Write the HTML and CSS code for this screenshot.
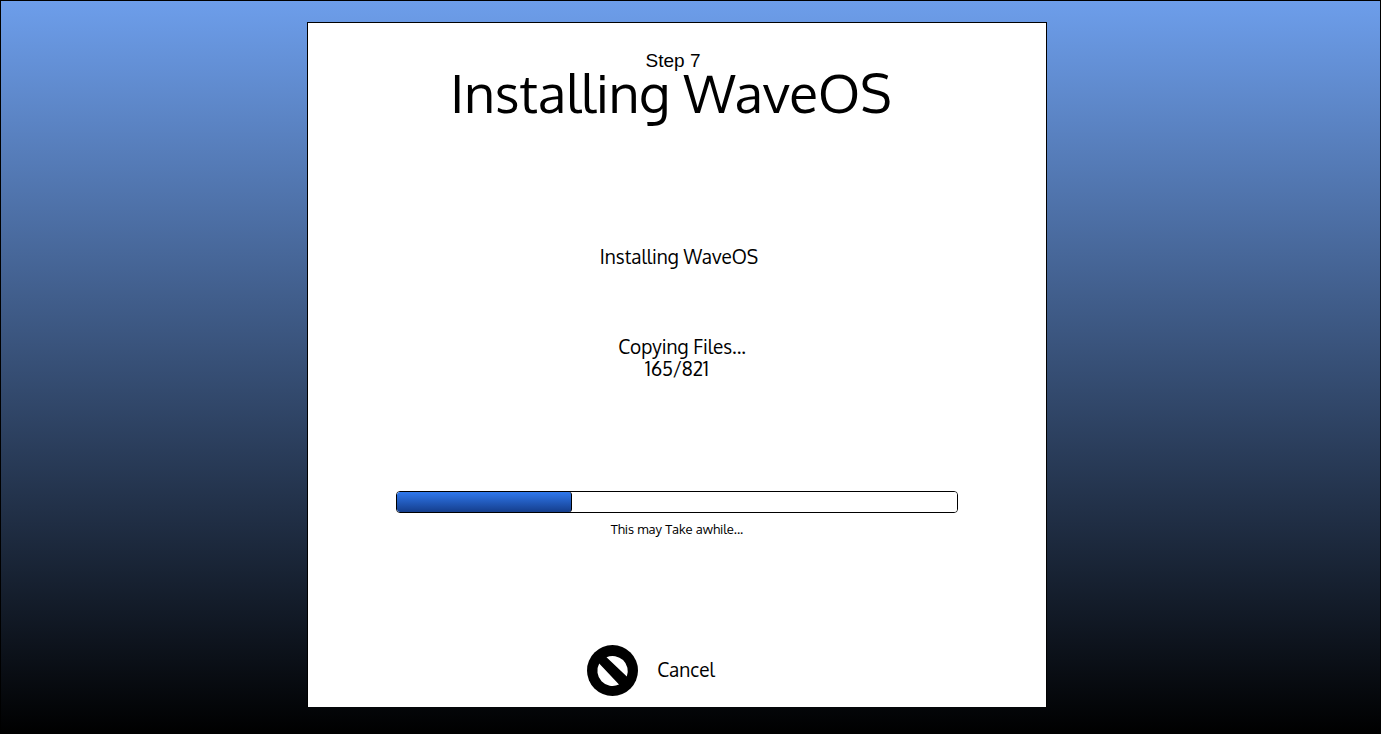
FILE: index.html
```html
<!DOCTYPE html>
<html lang="en">
<head>
<meta charset="utf-8">
<meta name="viewport" content="width=device-width, initial-scale=1">
<title>WaveOS Setup</title>
<link rel="stylesheet" href="styles.css">
</head>
<body class="desktop">
<main class="card">
  <header class="heading">
    <p class="step">Step 7</p>
    <h1 class="title">Installing WaveOS</h1>
  </header>
  <p class="task">Installing WaveOS</p>
  <div class="status">
    <p class="action">Copying Files...</p>
    <p class="count">165/821</p>
  </div>
  <div class="meter">
    <progress class="bar" id="install" max="100" value="31.2"></progress>
    <label class="note" for="install">This may Take awhile...</label>
  </div>
  <button class="cancel" type="button">
    <svg class="cancel-icon" viewBox="0 0 51 51" aria-hidden="true">
      <circle cx="25.5" cy="25.5" r="25.5"/>
      <path fill="#fff" d="M19.5 12.2A15.2 15.2 0 0 1 39.8 31.5ZM12.2 18.5A15.2 15.2 0 0 0 32 39.5Z"/>
    </svg>
    <span class="cancel-text">Cancel</span>
  </button>
</main>
</body>
</html>
```
FILE: styles.css
```css
* { box-sizing: border-box; }
.desktop {
  min-height: 100vh;
  margin: 0;
  padding: 21px 0 26px;
  border: 1px solid #000;
  display: grid;
  grid-template-columns: 306fr 740fr 333fr;
  background: linear-gradient(#6d9eeb, #000);
  color: #000;
  font: 19px/22px Oxygen, "Noto Sans", sans-serif;
}
.card {
  grid-column: 2;
  display: flex;
  flex-direction: column;
  align-items: center;
  padding: 27px 0 11px;
  border: 1px solid #000;
  border-bottom: 0;
  background: #fff;
}
.step, .title, .task, .action, .count { margin: 0; }
.heading {
  padding-right: 12px;
  text-align: center;
}
.step {
  padding-left: 4px;
  font: 19px/22px "Liberation Sans", Arial, sans-serif;
}
.title {
  font-size: 53px;
  line-height: 40px;
  font-weight: 400;
  white-space: nowrap;
}
.task {
  padding-left: 4px;
  margin-top: 133px;
}
.status {
  margin-top: 68px;
  text-align: center;
}
.action { padding-left: 10px; }
.meter {
  width: 76.2%;
  margin-top: 112px;
  display: flex;
  flex-direction: column;
  align-items: center;
  gap: 5px;
}
.bar {
  width: 100%;
  height: 22px;
  appearance: none;
  display: block;
  border: 1px solid #000;
  border-radius: 4px;
  background: #fff;
  overflow: hidden;
}
.bar::-webkit-progress-bar { background: #fff; }
.bar::-webkit-progress-value {
  border-right: 1px solid #000;
  border-radius: 0 3px 3px 0;
  background: linear-gradient(#2f78ed, #153e8c);
}
.note {
  font-size: 13px;
  line-height: 22px;
}
.cancel {
  margin: auto 52px 0 0;
  padding: 0;
  border: 0;
  background: none;
  color: inherit;
  font: inherit;
  display: flex;
  align-items: center;
  gap: 19px;
  cursor: pointer;
}
.cancel-icon {
  width: 51px;
  height: 51px;
}
.cancel-text { padding-bottom: 4px; }
```
